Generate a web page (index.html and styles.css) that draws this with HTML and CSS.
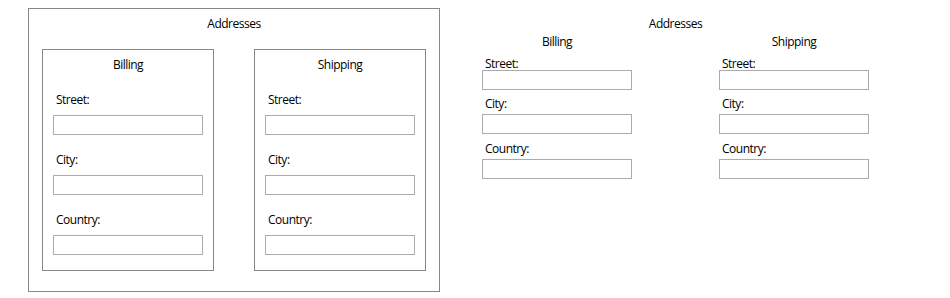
FILE: index.html
```html
<!DOCTYPE html>
<html lang="en">

<head>
    <meta charset="UTF-8">
    <meta name="viewport" content="width=device-width, initial-scale=1.0">
    <title>Addresses</title>
    <link rel="stylesheet" href="styles.css">
</head>

<body>
    <div class="page">
        <!-- boxed version -->
        <div class="group">
            <div class="group-title">Addresses</div>
            <div class="group-row">
                <div class="address-box">
                    <div class="box-title">Billing</div>
                    <div class="field-label first">Street:</div>
                    <input class="field-input" type="text">
                    <div class="field-label">City:</div>
                    <input class="field-input" type="text">
                    <div class="field-label">Country:</div>
                    <input class="field-input" type="text">
                </div>
                <div class="address-box">
                    <div class="box-title">Shipping</div>
                    <div class="field-label first">Street:</div>
                    <input class="field-input" type="text">
                    <div class="field-label">City:</div>
                    <input class="field-input" type="text">
                    <div class="field-label">Country:</div>
                    <input class="field-input" type="text">
                </div>
            </div>
        </div>

        <!-- flat version -->
        <div class="flat">
            <div class="flat-title">Addresses</div>
            <div class="flat-row">
                <div class="flat-col">
                    <div class="flat-head">Billing</div>
                    <div class="flat-label first">Street:</div>
                    <input class="field-input" type="text">
                    <div class="flat-label">City:</div>
                    <input class="field-input" type="text">
                    <div class="flat-label last">Country:</div>
                    <input class="field-input" type="text">
                </div>
                <div class="flat-col">
                    <div class="flat-head">Shipping</div>
                    <div class="flat-label first">Street:</div>
                    <input class="field-input" type="text">
                    <div class="flat-label">City:</div>
                    <input class="field-input" type="text">
                    <div class="flat-label last">Country:</div>
                    <input class="field-input" type="text">
                </div>
            </div>
        </div>
    </div>
</body>

</html>
```

FILE: styles.css
```css
body {
    font-family: "Open Sans", "Noto Sans", sans-serif;
    font-size: 12px;
    letter-spacing: -0.5px;
    color: #000;
    background-color: #fff;
    margin: 0;
    padding: 0;
}

.page {
    display: flex;
    align-items: flex-start;
    padding: 8px 0 0 28px;
}

.group {
    box-sizing: border-box;
    width: 412px;
    height: 284px;
    border: 1px solid #888888;
    padding: 7px 13px 0 13px;
}

.group-title {
    line-height: 16px;
    text-align: center;
}

.group-row {
    display: flex;
    gap: 40px;
    margin-top: 17px;
}

.address-box {
    box-sizing: border-box;
    width: 172px;
    height: 222px;
    border: 1px solid #888888;
    padding: 7px 10px 0 10px;
}

.box-title {
    line-height: 16px;
    text-align: center;
}

.field-label {
    line-height: 16px;
    padding-left: 3px;
    margin-top: 17px;
    margin-bottom: 7px;
}

.field-label.first {
    margin-top: 19px;
}

.field-input {
    display: block;
    box-sizing: border-box;
    width: 150px;
    height: 20px;
    margin: 0;
    padding: 0 3px;
    border: 1px solid #ababab;
    border-radius: 0;
    background-color: #fff;
    font: inherit;
    outline: none;
}

.flat {
    margin-left: 42px;
    padding-top: 8px;
}

.flat-title {
    line-height: 16px;
    text-align: center;
}

.flat-row {
    display: flex;
    gap: 87px;
}

.flat-col {
    width: 150px;
}

.flat-head {
    line-height: 16px;
    text-align: center;
    margin-top: 2px;
}

.flat-label {
    line-height: 16px;
    padding-left: 3px;
    margin-top: 6px;
    margin-bottom: 2px;
}

.flat-label.first {
    margin-top: 6px;
    margin-bottom: -2px;
}

.flat-label.last {
    margin-top: 7px;
}
```
